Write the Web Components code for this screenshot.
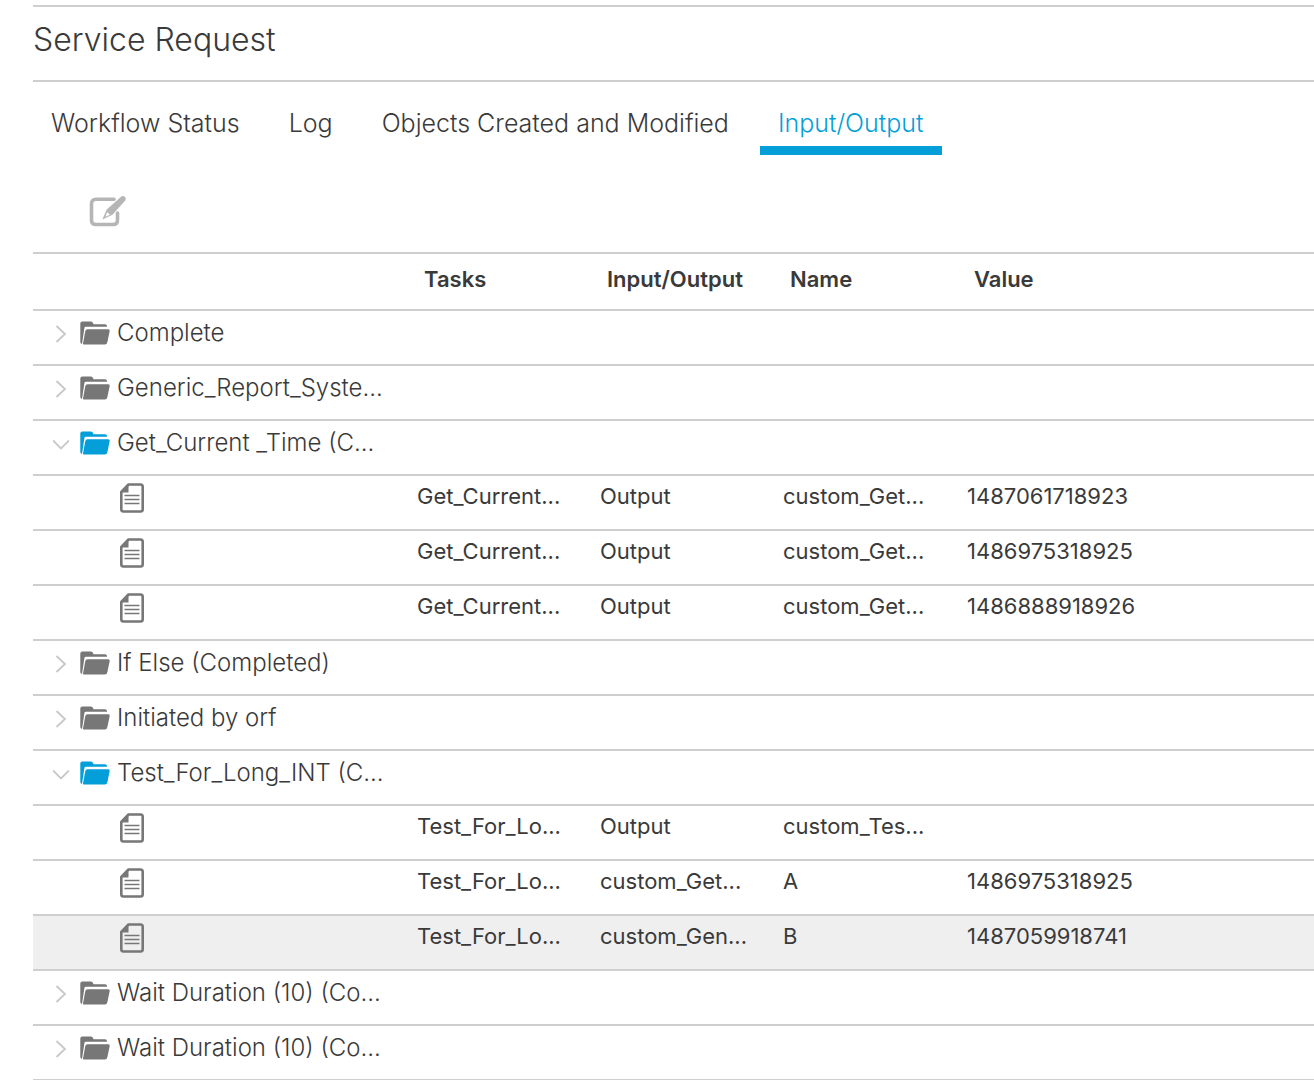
<!DOCTYPE html>
<html lang="en">
<head>
<meta charset="utf-8">
<title>Service Request</title>
<style>
  body { margin: 0; background: #fff; color: #3a3a3a; font-family: Inter, "Liberation Sans", sans-serif; }
</style>
</head>
<body>
<service-request-page>
  <span slot="title">Service Request</span>
  <tab-strip slot="tabs">
    <tab-item>Workflow Status</tab-item>
    <tab-item>Log</tab-item>
    <tab-item>Objects Created and Modified</tab-item>
    <tab-item selected>Input/Output</tab-item>
  </tab-strip>
  <tool-bar slot="tools"></tool-bar>
  <io-tree-table></io-tree-table>
</service-request-page>

<script>
class BaseElement extends HTMLElement {
  constructor() {
    super();
    this.attachShadow({ mode: "open" });
  }
  connectedCallback() {
    this.shadowRoot.innerHTML = this.render();
  }
}

customElements.define("service-request-page", class extends BaseElement {
  render() {
    return `
      <style>
        :host { display: block; padding: 5px 0 0 33px; }
        header { border: solid #cfcfcf; border-width: 2px 0; padding: 13px 0 20px; }
        h1 { margin: 0; font-size: 32px; line-height: 40px; font-weight: 300; }
      </style>
      <header><h1><slot name="title"></slot></h1></header>
      <slot name="tabs"></slot>
      <main>
        <slot name="tools"></slot>
        <slot></slot>
      </main>`;
  }
});

customElements.define("tab-strip", class extends BaseElement {
  render() {
    return `
      <style>
        :host { display: block; padding-top: 22px; }
        nav { display: flex; gap: 13px; }
      </style>
      <nav role="tablist"><slot></slot></nav>`;
  }
});

customElements.define("tab-item", class extends BaseElement {
  render() {
    const selected = this.hasAttribute("selected");
    return `
      <style>
        :host { display: block; }
        button {
          display: block; margin: 0; padding: 0 18px 4px; border: 0; border-bottom: 9px solid transparent;
          background: none; color: inherit; font: 300 25px/38px Inter, sans-serif; white-space: nowrap; cursor: pointer;
        }
        button[aria-selected="true"] { color: #049fd9; border-bottom-color: #049fd9; }
      </style>
      <button type="button" role="tab" aria-selected="${selected}"><slot></slot></button>`;
  }
});

customElements.define("tool-bar", class extends BaseElement {
  render() {
    return `
      <style>
        :host { display: block; padding: 39px 0 22px 55px; }
        button { display: block; padding: 0; border: 0; background: none; cursor: pointer; }
        svg { display: block; }
      </style>
      <button type="button" aria-label="Edit">
        <svg width="40" height="36" viewBox="0 0 40 36" aria-hidden="true">
          <path d="M26 5.300H8Q3.500 5.300 3.500 9.800V26Q3.500 30.500 8 30.500H25Q29.500 30.500 29.500 26V19" fill="none" stroke="#b5b5b5" stroke-width="3.600" stroke-linecap="round"/>
          <path d="M33 2.800Q35 1.300 37 3Q38.700 4.800 37.200 6.600L24.500 20.800L14.300 25.500L18.800 15.600Z" fill="#b5b5b5"/>
          <path d="M17.300 22.800L19.300 18.300L22 20.700Z" fill="#fff"/>
        </svg>
      </button>`;
  }
});

customElements.define("row-icon", class extends BaseElement {
  render() {
    const shapes = {
      closed: ["16", "20", `<path d="M3.500 2L12 10L3.500 18" fill="none" stroke="#c8c8c8" stroke-width="1.800"/>`],
      open: ["16", "20", `<path d="M0 6.500L8 14.500L16 6.500" fill="none" stroke="#c8c8c8" stroke-width="1.800"/>`],
      folder: ["30", "24", `
        <path d="M0.300 2.500Q0.300 0.500 2.300 0.500H11Q12.500 0.500 13 2L13.500 3.300H25Q27 3.300 27 5V5.700H6Q4.700 5.700 4.500 6.500L2 23Q0.300 22.500 0.300 21Z" fill="currentColor"/>
        <path d="M7.500 8.200H28.300Q30 8.200 29.700 9.900L27.400 21Q27 23.500 24.800 23.500H3.600Q2.900 23.500 3 22.500L5.300 10Q5.700 8.200 7.500 8.200Z" fill="currentColor"/>`],
      file: ["24", "30", `
        <path d="M8.500 1.500H20.500Q22.700 1.500 22.700 3.700V26.300Q22.700 28.500 20.500 28.500H3.500Q1.300 28.500 1.300 26.300V8.800Z" fill="none" stroke="#777" stroke-width="2.600" stroke-linejoin="round"/>
        <path d="M8.500 1V9.500H1Z" fill="#777"/>
        <path d="M4.500 12.500H19.500M4.500 16.500H19.500M4.500 20.500H19.500" fill="none" stroke="#777" stroke-width="1.500"/>`]
    };
    const [w, h, body] = shapes[this.getAttribute("name")];
    return `
      <style>:host { display: block; flex: none; } svg { display: block; }</style>
      <svg width="${w}" height="${h}" viewBox="0 0 ${w} ${h}" aria-hidden="true">${body}</svg>`;
  }
});

customElements.define("tree-branch", class extends BaseElement {
  render() {
    const open = this.hasAttribute("open");
    return `
      <style>
        :host { display: block; }
        button {
          display: flex; align-items: center; margin: 0; padding: 0 0 0 20px; border: 0; background: none;
          color: inherit; font: 300 24px/44px Inter, sans-serif; white-space: nowrap; cursor: pointer;
        }
        .folder { margin: 0 7px 0 11px; color: ${open ? "#049fd9" : "#777"}; }
        .arrow { margin-top: 1px; }
      </style>
      <button type="button" aria-expanded="${open}">
        <row-icon class="arrow" name="${open ? "open" : "closed"}"></row-icon>
        <row-icon class="folder" name="folder"></row-icon>
        <slot></slot>
      </button>`;
  }
});

customElements.define("io-tree-table", class extends BaseElement {
  render() {
    const groups = [
      { name: "Complete" },
      { name: "Generic_Report_Syste..." },
      { name: "Get_Current _Time (C...", rows: [
        ["Get_Current...", "Output", "custom_Get...", "1487061718923"],
        ["Get_Current...", "Output", "custom_Get...", "1486975318925"],
        ["Get_Current...", "Output", "custom_Get...", "1486888918926"]
      ] },
      { name: "If Else (Completed)" },
      { name: "Initiated by orf" },
      { name: "Test_For_Long_INT (C...", rows: [
        ["Test_For_Lo...", "Output", "custom_Tes...", ""],
        ["Test_For_Lo...", "custom_Get...", "A", "1486975318925"],
        ["Test_For_Lo...", "custom_Gen...", "B", "1487059918741"]
      ], active: 2 },
      { name: "Wait Duration (10) (Co..." },
      { name: "Wait Duration (10) (Co..." }
    ];
    const leaf = (cells, active) => `<tr${active ? ' class="active"' : ""}>
      <td class="leaf"><row-icon name="file"></row-icon></td>${cells.map(c => `<td>${c}</td>`).join("")}</tr>`;
    const body = groups.map(g => `<tr><td class="branch" colspan="5">
      <tree-branch${g.rows ? " open" : ""}>${g.name}</tree-branch></td></tr>
      ${(g.rows || []).map((r, i) => leaf(r, g.active === i)).join("")}`).join("");
    return `
      <style>
        :host { display: block; }
        table { width: 100%; table-layout: fixed; border-spacing: 0; border-top: 2px solid #cfcfcf; }
        th, td { box-sizing: border-box; height: 55px; padding: 0 7px; border-bottom: 2px solid #cfcfcf; text-align: left; vertical-align: top; white-space: nowrap; }
        thead th, thead td { height: 57px; }
        th { padding-left: 14px; font-size: 22px; line-height: 50px; font-weight: 600; }
        td { font-size: 22px; line-height: 40px; font-weight: 400; }
        .branch { padding: 0; }
        .leaf { padding: 7px 0 0 87px; }
        .active td { background: #efefef; }
        .tree { width: 377px; }
        .data { width: 183px; }
        .name { width: 184px; }
      </style>
      <table>
        <colgroup><col class="tree"><col class="data"><col class="data"><col class="name"><col></colgroup>
        <thead><tr><td></td><th>Tasks</th><th>Input/Output</th><th>Name</th><th>Value</th></tr></thead>
        <tbody>${body}</tbody>
      </table>`;
  }
});
</script>
</body>
</html>
